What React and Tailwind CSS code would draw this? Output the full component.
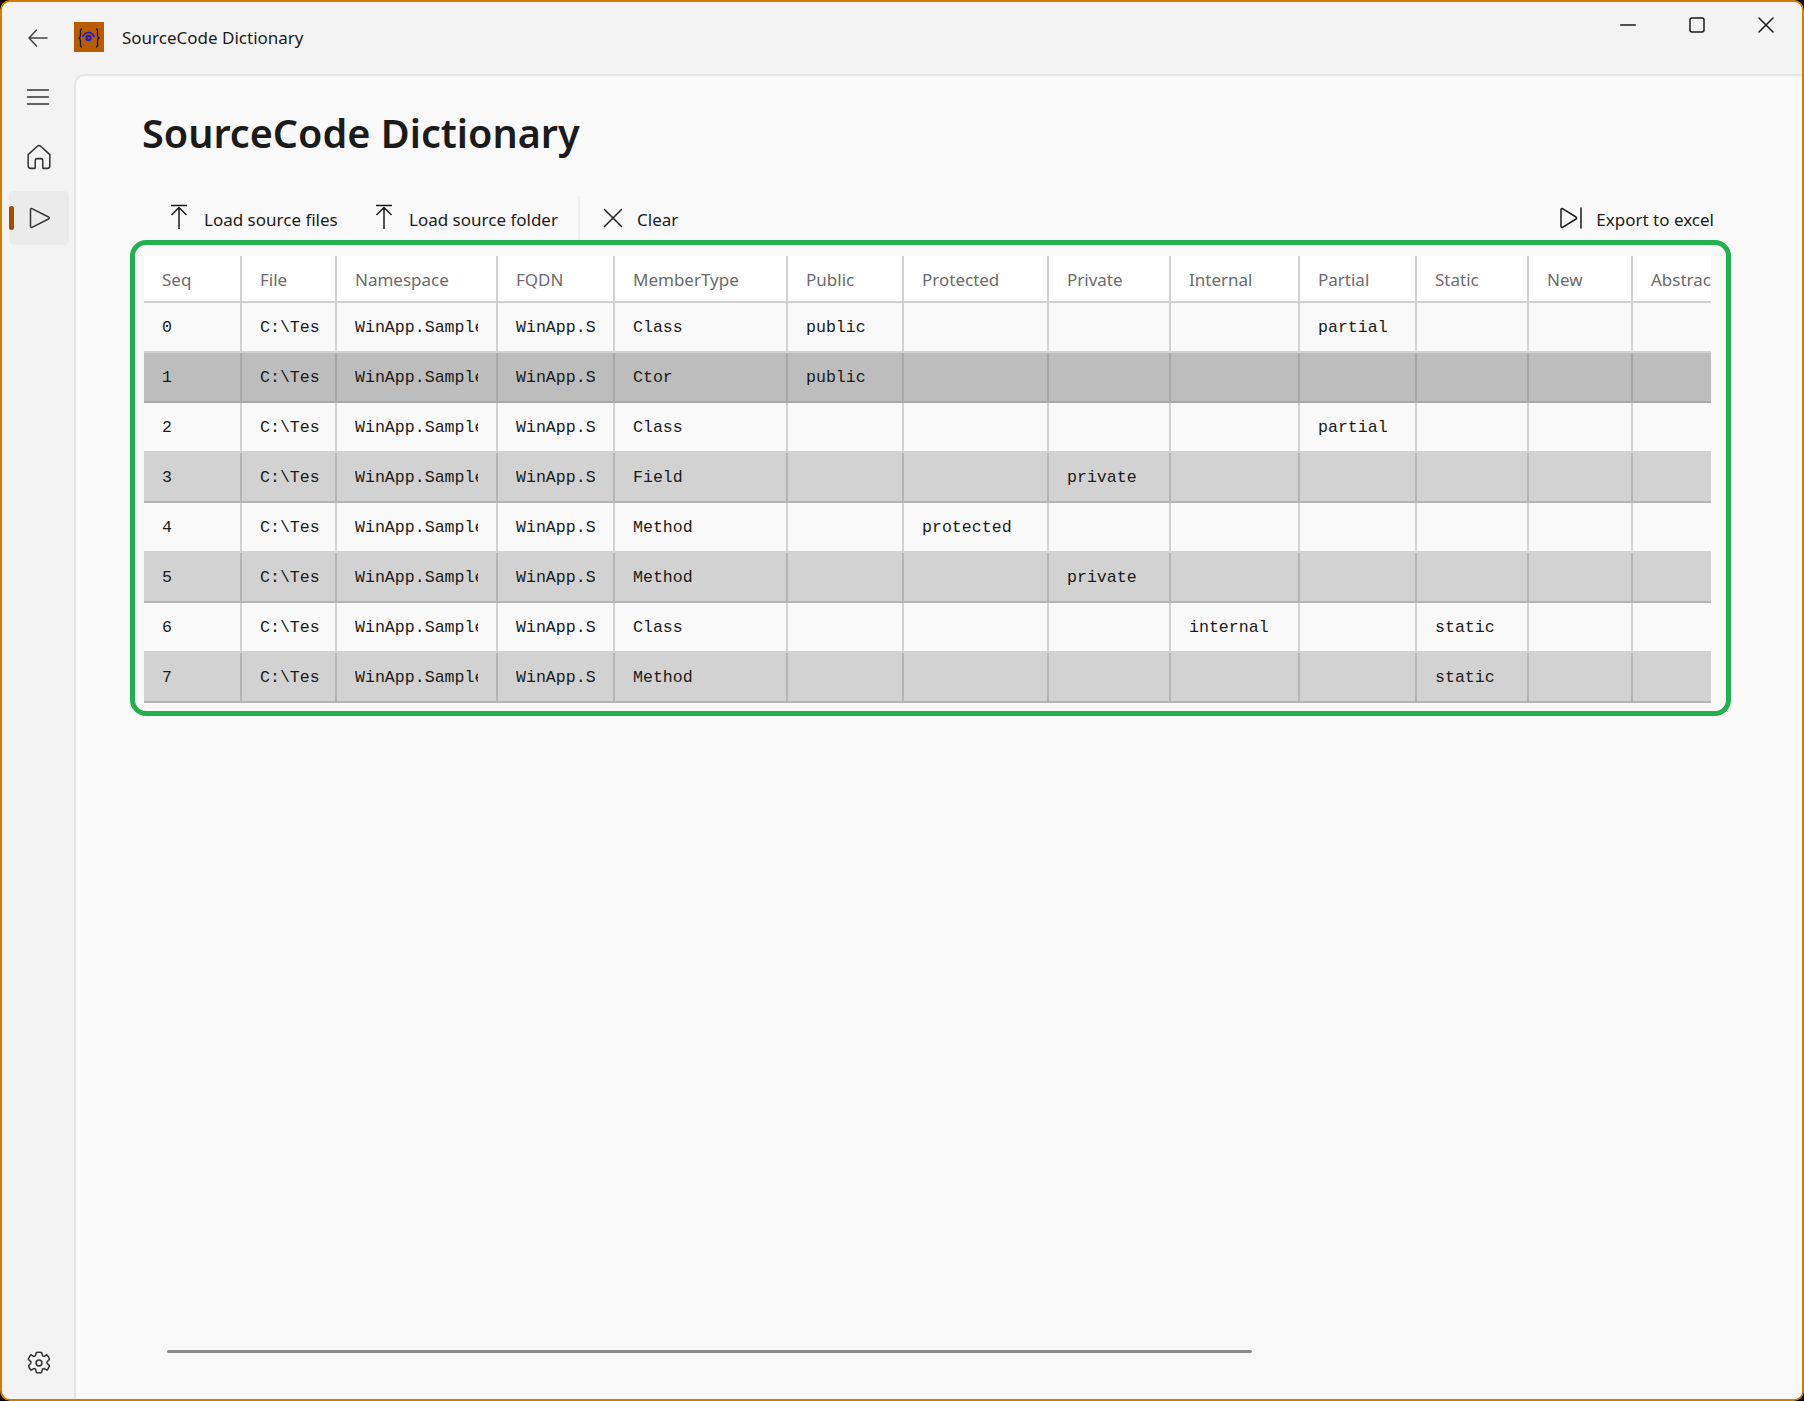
import React from "react";

const uiFont = "font-['Noto_Sans',sans-serif]";
const headers = ["Seq", "File", "Namespace", "FQDN", "MemberType", "Public", "Protected", "Private", "Internal", "Partial", "Static", "New", "Abstract"];
const gridCols = "grid grid-cols-[98px_95px_161px_117px_173px_116px_145px_122px_129px_117px_112px_104px_120px]";

const rows = [
  { kind: "Class", public: "public", partial: "partial" },
  { kind: "Ctor", public: "public", selected: true },
  { kind: "Class", partial: "partial" },
  { kind: "Field", private: "private" },
  { kind: "Method", protected: "protected" },
  { kind: "Method", private: "private" },
  { kind: "Class", internal: "internal", static: "static" },
  { kind: "Method", static: "static" },
];

const Icon = ({ className, children, w = 24, h = 24 }) => (
  <svg width={w} height={h} viewBox={`0 0 ${w} ${h}`} fill="none" stroke="currentColor" strokeWidth="1.5" strokeLinecap="round" strokeLinejoin="round" className={className}>
    {children}
  </svg>
);

const UploadIcon = () => (
  <Icon w={20} h={26} className="mt-[2px]">
    <path d="M2 1.5h16M10 25V3.5M2.5 11 10 3.5l7.500 7.500" strokeLinecap="butt" />
  </Icon>
);

const ToolButton = ({ icon, label, className }) => (
  <button className={`flex items-center text-[17px] text-[#1b1b1b] ${className}`}>
    {icon}
    <span className="mt-[8px]">{label}</span>
  </button>
);

const Cell = ({ children, rowClass }) => (
  <div className={`h-full min-w-0 border-r-2 pl-[18px] flex items-center ${rowClass}`}>
    <div className="overflow-hidden whitespace-nowrap w-full">{children}</div>
  </div>
);

const App = () => {
  return (
    <div className={`w-[1804px] h-[1401px] bg-black ${uiFont}`}>
      <div className="h-full rounded-[10px] border-2 border-[#d67a00] bg-[#f3f3f3] flex flex-col overflow-hidden">
        {/* title bar */}
        <div className="h-[72px] flex items-center shrink-0 relative">
          <Icon className="ml-[25px] text-[#444]" w={22} h={20}>
            <path d="M20 10H2M9.500 2 2 10l7.500 8" />
          </Icon>
          <svg width="30" height="30" viewBox="0 0 30 30" className="ml-[25px] mb-[2px]">
            <rect width="30" height="30" fill="#b85c00" />
            <path d="M8 7C6 7 6.500 9 6.500 12s-.5 4-2 4c1.500 0 2 1 2 4s-.5 5 1.500 5M22 7c2 0 1.500 2 1.500 5s.5 4 2 4c-1.500 0-2 1-2 4s.5 5-1.500 5" fill="none" stroke="#1a1a1a" strokeWidth="1.300" />
            <path d="M8.500 15c3-6 9-6 12 0" fill="none" stroke="#1a1ad0" strokeWidth="1.500" />
            <circle cx="14.500" cy="16" r="3.200" fill="#1a1ae0" />
            <circle cx="14.500" cy="16" r="1" fill="#b85c00" />
          </svg>
          <span className="ml-[18px] text-[17px] text-[#1b1b1b]">SourceCode Dictionary</span>
          <div className="ml-auto mr-[28px] mb-[26px] flex items-center gap-[53px] text-[#1b1b1b]">
            <Icon w={16} h={16}>
              <path d="M0.750 8h14.500" />
            </Icon>
            <Icon w={16} h={16}>
              <rect x="1" y="1" width="14" height="14" rx="2" />
            </Icon>
            <Icon w={16} h={16}>
              <path d="m1 1 14 14M15 1 1 15" />
            </Icon>
          </div>
        </div>

        <div className="flex-1 flex min-h-0">
          {/* nav rail */}
          <div className="w-[72px] shrink-0 flex flex-col text-[#333]">
            <div className="h-[46px] flex items-center justify-center">
              <Icon w={24} h={18}>
                <path d="M1.500 2h21M1.500 9h21M1.500 16h21" />
              </Icon>
            </div>
            <div className="h-[54px] mt-[10px] pl-[2px] flex items-center justify-center">
              <svg width="26" height="26" viewBox="0 0 24 24" fill="none" stroke="currentColor" strokeWidth="1.400" strokeLinejoin="round">
                <path d="M2 9.800 10.200 2.300a2.600 2.600 0 0 1 3.600 0L22 9.800V20a2.500 2.500 0 0 1-2.500 2.500H16a.5.5 0 0 1-.5-.5v-6.500a2 2 0 0 0-2-2h-3a2 2 0 0 0-2 2V22a.5.5 0 0 1-.5.5H4.500A2.500 2.500 0 0 1 2 20Z" />
              </svg>
            </div>
            <div className="h-[54px] w-[60px] ml-[7px] mt-[7px] rounded-[5px] bg-[#ebebeb] flex items-center relative">
              <div className="absolute left-0 top-[15px] w-[5px] h-[24px] rounded-[3px] bg-[#a34c00]" />
              <Icon w={22} h={22} className="ml-[19px]">
                <path d="M2.500 2.500v17a1 1 0 0 0 1.500.8L20.500 12a1.100 1.100 0 0 0 0-2L4 1.700a1 1 0 0 0-1.500.8Z" />
              </Icon>
            </div>
            <div className="mt-auto mb-[9px] pl-[2px] h-[54px] flex items-center justify-center">
              <svg width="26" height="26" viewBox="0 0 24 24" fill="none" stroke="currentColor" strokeWidth="1.400" strokeLinejoin="round">
                <path d="M9.600 2.300a10 10 0 0 1 4.800 0l.6 2.400a1.500 1.500 0 0 0 2.200.9l2.100-1.200a10 10 0 0 1 2.400 4.100l-1.700 1.800a1.500 1.500 0 0 0 0 2.400l1.700 1.800a10 10 0 0 1-2.400 4.100l-2.100-1.200a1.500 1.500 0 0 0-2.200.9l-.6 2.400a10 10 0 0 1-4.800 0l-.6-2.400a1.500 1.500 0 0 0-2.200-.9l-2.100 1.200a10 10 0 0 1-2.400-4.100l1.700-1.800a1.500 1.500 0 0 0 0-2.400L2.100 8.500a10 10 0 0 1 2.400-4.100l2.100 1.200a1.500 1.500 0 0 0 2.200-.9Z" />
                <circle cx="12" cy="12" r="2.700" />
              </svg>
            </div>
          </div>

          {/* page */}
          <div className="flex-1 min-w-0 flex flex-col bg-[#f9f9f9] rounded-tl-[10px] border-l-2 border-t-2 border-[#e5e5e5]">
            <h1 className="ml-[66px] mt-[30px] text-[39.600px] leading-[54px] font-semibold text-[#1b1b1b]">SourceCode Dictionary</h1>

            <div className="ml-[93px] mt-[31px] h-[49px] flex items-center w-[1545px] shrink-0">
              <ToolButton label="Load source files" icon={<UploadIcon />} className="gap-[15px] w-[205px]" />
              <ToolButton label="Load source folder" icon={<UploadIcon />} className="gap-[15px] w-[204px]" />
              <div className="w-[2px] h-[44px] mt-[5px] bg-[#efefef]" />
              <ToolButton label="Clear" icon={
                <Icon w={20} h={20} className="mt-[4px]"><path d="m1.500 1.500 17 17M18.500 1.500l-17 17" /></Icon>
              } className="ml-[23px] gap-[14px]" />
              <ToolButton label="Export to excel" icon={
                <Icon w={24} h={22} className="mt-[4px]">
                  <path d="M2 2.500v17a1 1 0 0 0 1.500.8L17 12a1.200 1.200 0 0 0 0-2L3.500 1.700A1 1 0 0 0 2 2.500ZM22 1v20" />
                </Icon>
              } className="ml-auto gap-[13px]" />
            </div>

            <div className="ml-[54px] w-[1601px] h-[476px] shrink-0 rounded-[16px] border-[5px] border-[#22b14c] pl-[9px] pt-[11px]">
              <div className="w-[1567px] overflow-hidden">
                <div className={`${gridCols} h-[47px] w-[1609px] bg-white text-[#6b6b6b] text-[17px]`}>
                  {headers.map((h) => (
                    <Cell key={h} rowClass="border-[#d2d2d2] border-b-2 pt-[3px] pr-[18px]">{h}</Cell>
                  ))}
                </div>
                {rows.map((row, i) => {
                  const alt = i % 2 === 1;
                  const bg = row.selected ? "bg-[#bdbdbd]" : alt ? "bg-[#d2d2d2]" : "bg-[#f9f9f9]";
                  const line = row.selected ? "border-[#a8a8a8]" : alt ? "border-[#b4b4b4]" : "border-[#d2d2d2]";
                  const values = [i, "C:\\Test\\MainWindow.cs", "WinApp.SampleApp", "WinApp.SampleApp", row.kind, row.public, row.protected, row.private, row.internal, row.partial, row.static, "", ""];
                  return (
                    <div key={i} className={`${gridCols} h-[50px] w-[1609px] border-b-2 ${bg} ${line} font-['Liberation_Mono',monospace] text-[16.600px] text-[#1b1b1b]`}>
                      {values.map((v, j) => (
                        <Cell key={j} rowClass={`${line} pt-[3px] ${j === 1 ? "pr-[16px]" : "pr-[18px]"}`}>{v}</Cell>
                      ))}
                    </div>
                  );
                })}
              </div>
            </div>

            <div className="ml-[91px] w-[1085px] h-[3px] mt-auto mb-[46px] rounded-full bg-[#8a8a8a] shrink-0" />
          </div>
        </div>
      </div>
    </div>
  );
};

export default App;
